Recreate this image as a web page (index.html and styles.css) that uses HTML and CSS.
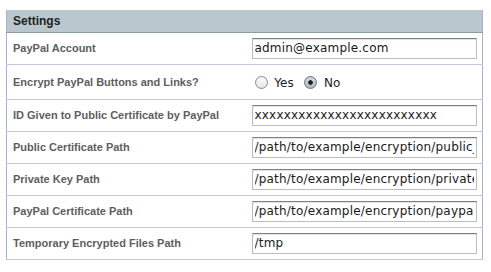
FILE: index.html
```html
<!DOCTYPE html>
<html lang="en">

<head>
    <meta charset="UTF-8">
    <title>Settings</title>
    <link rel="stylesheet" href="styles.css">
</head>

<body>
    <table class="settings">
        <thead>
            <tr>
                <th colspan="2">Settings</th>
            </tr>
        </thead>
        <tbody>
            <tr>
                <td class="label">PayPal Account</td>
                <td class="field"><input type="text" value="admin@example.com"></td>
            </tr>
            <tr class="tall">
                <td class="label">Encrypt PayPal Buttons and Links?</td>
                <td class="field">
                    <label class="radio"><input type="radio" name="encrypt"> Yes</label>
                    <label class="radio"><input type="radio" name="encrypt" checked> No</label>
                </td>
            </tr>
            <tr>
                <td class="label">ID Given to Public Certificate by PayPal</td>
                <td class="field"><input type="text" value="xxxxxxxxxxxxxxxxxxxxxxxxx"></td>
            </tr>
            <tr>
                <td class="label">Public Certificate Path</td>
                <td class="field"><input type="text" value="/path/to/example/encryption/public_cert.pem"></td>
            </tr>
            <tr>
                <td class="label">Private Key Path</td>
                <td class="field"><input type="text" value="/path/to/example/encryption/private_key.pem"></td>
            </tr>
            <tr>
                <td class="label">PayPal Certificate Path</td>
                <td class="field"><input type="text" value="/path/to/example/encryption/paypal_cert.pem"></td>
            </tr>
            <tr>
                <td class="label">Temporary Encrypted Files Path</td>
                <td class="field"><input type="text" value="/tmp"></td>
            </tr>
        </tbody>
    </table>
</body>

</html>
```

FILE: styles.css
```css
* {
    margin: 0;
    padding: 0;
    box-sizing: border-box;
}

body {
    background-color: #ffffff;
    padding: 10px 0 0 6px;
    font-family: 'Liberation Sans', Arial, sans-serif;
}

.settings {
    width: 477px;
    border-collapse: collapse;
    border-left: 1px solid #a9b0d4;
    border-right: 1px solid #a9b0d4;
}

.settings th {
    height: 22px;
    padding: 0 0 0 6px;
    text-align: left;
    font-size: 12px;
    font-weight: bold;
    color: #1e1e1e;
    background-color: #b9c8cf;
    border-bottom: 1px solid #8e9ba2;
}

.settings td {
    height: 32px;
    border-bottom: 1px solid #c3c9dc;
    vertical-align: middle;
}

.settings tr.tall td {
    height: 35px;
}

.label {
    width: 245px;
    padding-left: 6px;
    font-size: 11px;
    font-weight: bold;
    color: #5e5e5e;
}

.field input[type="text"] {
    display: block;
    width: 225px;
    height: 21px;
    padding: 0 2px;
    font-family: 'DejaVu Sans', sans-serif;
    font-size: 12px;
    letter-spacing: 0.2px;
    color: #1a1a1a;
    border: 1px solid #bdbdbd;
    border-top-color: #808080;
    box-shadow: inset 0 1px 1px rgba(0, 0, 0, 0.12);
    outline: none;
}

.radio {
    font-family: 'DejaVu Sans', sans-serif;
    font-size: 12px;
    color: #222222;
    margin-right: 3px;
}

.radio input {
    appearance: none;
    -webkit-appearance: none;
    display: inline-block;
    width: 13px;
    height: 13px;
    margin: 0 3px 0 3px;
    vertical-align: -2px;
    border: 1px solid #8c8c8c;
    border-radius: 50%;
    background: linear-gradient(#ffffff, #e4e4e4);
    box-shadow: inset 0 1px 1px rgba(0, 0, 0, 0.08);
}

.radio input:checked {
    border-color: #6f7780;
    background: radial-gradient(circle, #1e1e1e 0 2px, transparent 2.5px), linear-gradient(#d8dee6, #a9b3bf);
}
```
